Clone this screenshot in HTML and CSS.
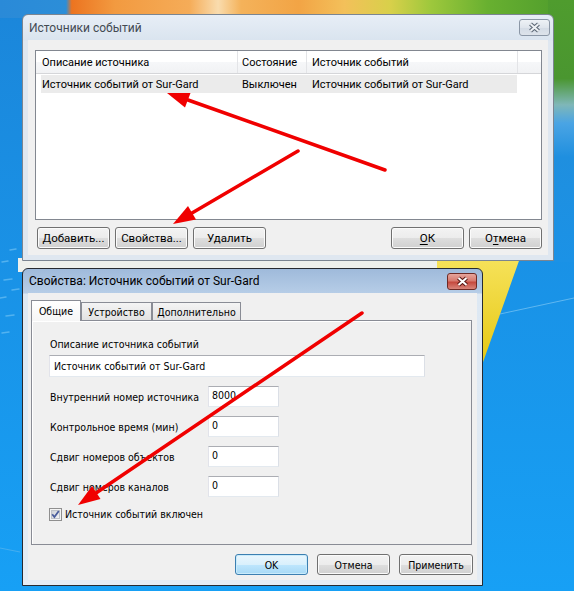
FILE: index.html
```html
<!DOCTYPE html>
<html lang="ru">
<head>
<meta charset="utf-8">
<title>Источники событий</title>
<link rel="stylesheet" href="styles.css">
</head>
<body>
<svg class="wallpaper" width="574" height="591" viewBox="0 0 574 591">
  <defs>
    <linearGradient id="gBlue" x1="0" y1="0" x2="0" y2="1">
      <stop offset="0" stop-color="#1b86da"/>
      <stop offset="1" stop-color="#17a0f5"/>
    </linearGradient>
    <linearGradient id="gTop" x1="0" y1="0" x2="574" y2="0" gradientUnits="userSpaceOnUse">
      <stop offset="0" stop-color="#2a8ad8"/>
      <stop offset="0.115" stop-color="#2c8ed8"/>
      <stop offset="0.125" stop-color="#ec7420"/>
      <stop offset="0.2" stop-color="#f29a40"/>
      <stop offset="0.33" stop-color="#f5ac58"/>
      <stop offset="0.38" stop-color="#f9dcae"/>
      <stop offset="0.42" stop-color="#f4b25a"/>
      <stop offset="0.52" stop-color="#f2a445"/>
      <stop offset="0.6" stop-color="#f3c05a"/>
      <stop offset="0.68" stop-color="#d8d04a"/>
      <stop offset="0.75" stop-color="#9ec83c"/>
      <stop offset="0.85" stop-color="#68b030"/>
      <stop offset="1" stop-color="#4c9a2c"/>
    </linearGradient>
    <linearGradient id="gRight" x1="0" y1="0" x2="0" y2="262" gradientUnits="userSpaceOnUse">
      <stop offset="0" stop-color="#4f9c2e"/>
      <stop offset="0.3" stop-color="#4a9630"/>
      <stop offset="0.4" stop-color="#7fb7b8"/>
      <stop offset="0.47" stop-color="#4aa4e4"/>
      <stop offset="0.6" stop-color="#1f8fdf"/>
      <stop offset="1" stop-color="#1b92e6"/>
    </linearGradient>
    <linearGradient id="gYellow" x1="0" y1="0" x2="0" y2="1">
      <stop offset="0" stop-color="#f6e25a"/>
      <stop offset="1" stop-color="#e6c812"/>
    </linearGradient>
  </defs>
  <rect width="574" height="591" fill="url(#gBlue)"/>
  <rect x="0" y="0" width="574" height="18" fill="url(#gTop)"/>
  <rect x="548" y="0" width="26" height="262" fill="url(#gRight)"/>
  <rect x="18" y="258" width="480" height="14" fill="#eef0ec"/>
  <polygon points="437,258 520,258 482,365 478,272 437,272" fill="url(#gYellow)"/>
  <g stroke="#6cc0f4" stroke-width="1.5" stroke-linecap="round" opacity="0.7">
    <line x1="2" y1="262" x2="8" y2="261"/>
    <line x1="4" y1="280" x2="12" y2="279"/>
    <line x1="0" y1="298" x2="6" y2="297"/>
    <line x1="6" y1="316" x2="14" y2="315"/>
    <line x1="2" y1="333" x2="9" y2="332"/>
    <line x1="10" y1="250" x2="16" y2="249"/>
    <line x1="12" y1="290" x2="19" y2="289"/>
  </g>
  <line x1="500" y1="314" x2="574" y2="298" stroke="#8fd0f7" stroke-width="1" opacity="0.6"/>
  <line x1="0" y1="548" x2="20" y2="552" stroke="#63b8ee" stroke-width="1" opacity="0.6"/>
</svg>

<div class="window w1">
  <div class="titlebar">
    <span class="title">Источники событий</span>
    <span class="closebtn gray">
      <svg width="15" height="11" viewBox="0 0 15 11"><path d="M3.5 2 L11.5 9 M11.5 2 L3.5 9" stroke="#5d6876" stroke-width="4.2" fill="none"/><path d="M3.5 2 L11.5 9 M11.5 2 L3.5 9" stroke="#eef1f4" stroke-width="2" fill="none"/></svg>
    </span>
  </div>
  <div class="client c1">
    <div class="listview">
      <div class="lv-head">
        <div class="hcol col-desc">Описание источника</div>
        <div class="hcol col-state">Состояние</div>
        <div class="hcol col-src">Источник событий</div>
        <div class="hcol col-fill"></div>
      </div>
      <div class="lv-row">
        <div class="rcol col-desc">Источник событий от Sur-Gard</div>
        <div class="rcol col-state">Выключен</div>
        <div class="rcol col-src">Источник событий от Sur-Gard</div>
      </div>
    </div>
    <div class="btnrow">
      <div class="btn">Добавить...</div>
      <div class="btn">Свойства...</div>
      <div class="btn">Удалить</div>
      <div class="spacer"></div>
      <div class="btn"><u>О</u>К</div>
      <div class="btn">О<u>т</u>мена</div>
    </div>
  </div>
</div>

<div class="window w2">
  <div class="titlebar">
    <span class="title">Свойства: Источник событий от Sur-Gard</span>
    <span class="closebtn red">
      <svg width="15" height="11" viewBox="0 0 15 11"><path d="M3.5 2 L11.5 9 M11.5 2 L3.5 9" stroke="#5a1a16" stroke-width="4.2" fill="none"/><path d="M3.5 2 L11.5 9 M11.5 2 L3.5 9" stroke="#ffffff" stroke-width="2" fill="none"/></svg>
    </span>
  </div>
  <div class="client c2">
    <div class="tabs">
      <div class="tab active t1">Общие</div>
      <div class="tab t2">Устройство</div>
      <div class="tab t3">Дополнительно</div>
    </div>
    <div class="panel">
      <div class="lbl top-lbl">Описание источника событий</div>
      <div class="textbox wide">Источник событий от Sur-Gard</div>
      <div class="fields">
        <div class="lbl">Внутренний номер источника</div><div class="textbox num">8000</div>
        <div class="lbl">Контрольное время (мин)</div><div class="textbox num">0</div>
        <div class="lbl">Сдвиг номеров объектов</div><div class="textbox num">0</div>
        <div class="lbl">Сдвиг номеров каналов</div><div class="textbox num">0</div>
      </div>
      <div class="check">
        <span class="cb"><svg width="13" height="13" viewBox="0 0 13 13"><defs><linearGradient id="gCb" x1="0" y1="0" x2="1" y2="1"><stop offset="0" stop-color="#cbcfd5"/><stop offset="1" stop-color="#f6f6f6"/></linearGradient></defs><rect x="0.5" y="0.5" width="12" height="12" fill="#f4f4f4" stroke="#8f8f8f"/><rect x="2.5" y="2.5" width="8" height="8" fill="url(#gCb)" stroke="#bfc3c9"/><path d="M3.2 6.2 L5.4 9 L9.8 3" stroke="#4a5d9c" stroke-width="1.8" fill="none"/></svg></span>
        <span class="check-lbl">Источник событий включен</span>
      </div>
    </div>
    <div class="btnrow2">
      <div class="btn default">OK</div>
      <div class="btn">Отмена</div>
      <div class="btn b-apply">Применить</div>
    </div>
  </div>
</div>

<svg class="arrows" width="574" height="591" viewBox="0 0 574 591">
  <g stroke="#f00000" stroke-width="3.5" stroke-linecap="round" fill="none">
    <line x1="385" y1="170" x2="188" y2="100"/>
    <line x1="298" y1="151" x2="192" y2="213"/>
    <line x1="362" y1="313" x2="96" y2="493"/>
  </g>
  <g fill="#f00000">
    <polygon points="167,93 190.5,93 185,107.5"/>
    <polygon points="173,224 188,206 196,219.5"/>
    <polygon points="78,505 92,486 100.5,499"/>
  </g>
</svg>
</body>
</html>
```

FILE: styles.css
```css
* { box-sizing: border-box; }
html, body { margin: 0; padding: 0; }
body {
  width: 574px;
  height: 591px;
  overflow: hidden;
  position: relative;
  background: #1a8fe2;
  font-family: Roboto, "Open Sans", sans-serif;
  font-size: 11px;
  color: #000;
}
.wallpaper, .arrows { position: absolute; left: 0; top: 0; display: block; }
.arrows { pointer-events: none; }

/* windows */
.window {
  position: absolute;
  display: flex;
  flex-direction: column;
  border: 1px solid #7b8591;
  border-radius: 6px 6px 0 0;
  padding: 0 5px 5px;
}
.w1 {
  left: 22px; top: 14px; width: 532px; height: 247px;
  background: linear-gradient(#e7eef6 0, #dae4ef 25px, #dfe7f0 26px, #dfe7f0 100%);
}
.w2 {
  left: 22px; top: 268px; width: 461px; height: 318px;
  border-color: #262a30;
  background: linear-gradient(#9fbadb 0, #b6cde7 24px, #dde8f3 25px, #e4ecf4 100%);
}
.titlebar {
  flex: none;
  display: flex;
  justify-content: space-between;
  align-items: flex-start;
}
.w1 .titlebar { height: 25px; }
.w2 .titlebar { height: 24px; }
.title {
  font-family: Roboto, "Open Sans", sans-serif;
  font-size: 12px;
  line-height: 16px;
  padding-left: 1px;
  white-space: nowrap;
}
.w1 .title { padding-top: 5px; color: #434a52; }
.w2 .title { padding-top: 4px; color: #000; }
.closebtn {
  margin-top: 4px;
  height: 17px;
  border-radius: 3px;
  display: flex;
  align-items: center;
  justify-content: center;
}
.closebtn.gray {
  width: 31px; margin-right: -2px;
  border: 1px solid #8b97a6;
  background: linear-gradient(#eef2f6 0, #dfe5ec 50%, #d3dbe5 51%, #dde3ea 100%);
}
.closebtn.red {
  width: 30px;
  border: 1px solid #6e2a25;
  background: linear-gradient(#e6a59c 0, #d77a6f 45%, #c54a3f 55%, #d8857a 100%);
}

.client { background: #f0f0f0; flex: 1; display: flex; flex-direction: column; }

/* dialog 1 */
.c1 { padding: 10px 6px 6px 7px; }
.listview {
  height: 170px;
  background: #fff;
  border: 1px solid #828790;
}
.lv-head {
  display: flex;
  height: 23px;
  background: linear-gradient(#ffffff 0, #ffffff 50%, #f6f7f9 51%, #f1f2f4 100%);
  border-bottom: 1px solid #d5d6d9;
}
.hcol {
  line-height: 20px;
  padding-top: 2px;
  border-right: 1px solid #e3e4e7;
  white-space: nowrap;
}
.hcol.col-desc { width: 202px; padding-left: 6px; }
.hcol.col-state { width: 69px; padding-left: 4px; }
.hcol.col-src { width: 211px; padding-left: 5px; }
.hcol.col-fill { flex: 1; border-right: none; }
.lv-row {
  display: flex;
  margin: 1px 0 0 5px;
  width: 476px;
  height: 18px;
  background: #ebebeb;
  line-height: 18px;
}
.rcol { white-space: nowrap; padding-top: 1px; }
.rcol.col-desc { width: 197px; padding-left: 1px; }
.rcol.col-state { width: 69px; padding-left: 4px; }
.rcol.col-src { width: 210px; padding-left: 5px; }

.btn {
  flex: none;
  width: 73px;
  height: 22px;
  border: 1px solid #707070;
  border-radius: 3px;
  background: linear-gradient(#f3f3f3 0, #ececec 50%, #dedede 51%, #d0d0d0 100%);
  box-shadow: inset 0 0 0 1px #fbfbfb;
  display: flex;
  align-items: center;
  justify-content: center;
  white-space: nowrap;
}
.btn u { text-decoration: underline; text-underline-offset: 2px; }
.btnrow {
  display: flex;
  gap: 5px;
  margin-top: 7px;
  padding-left: 2px;
  font-size: 11.5px;
}
.spacer { flex: 1; }

/* dialog 2 */
.c2 {
  padding: 7px 4px 5px 3px;
  font-family: "DejaVu Sans Condensed", "Liberation Sans", sans-serif;
  font-size: 10.5px;
}
.tabs { display: flex; height: 20px; align-items: flex-end; }
.tab {
  height: 18px;
  border: 1px solid #898c95;
  border-bottom: none;
  background: linear-gradient(#f4f4f4, #e2e2e2);
  display: flex;
  align-items: center;
  justify-content: center;
  line-height: 14px;
  padding-top: 1px;
}
.tab.active {
  height: 21px;
  margin-bottom: -1px;
  position: relative;
  z-index: 1;
  background: linear-gradient(#ffffff, #f6f6f6);
  padding-top: 0;
}
.t1 { width: 50px; }
.t2 { width: 71px; }
.t3 { width: 89px; }
.panel {
  width: 441px;
  height: 225px;
  border: 1px solid #898c95;
  background: #f0f0f0;
  box-shadow: inset 1px 1px 0 #ffffff;
  padding: 16px 0 0 17px;
}
.lbl { line-height: 15px; white-space: nowrap; }
.top-lbl { padding-left: 1px; }
.textbox {
  background: #fff;
  border: 1px solid;
  border-color: #abadb3 #dbdfe6 #e3e9ef #e2e3ea;
  white-space: nowrap;
}
.textbox.wide {
  margin-top: 3px;
  width: 376px;
  height: 22px;
  line-height: 20px;
  padding-left: 4px;
}
.fields {
  display: grid;
  grid-template-columns: 159px 71px;
  grid-auto-rows: 21px;
  row-gap: 9px;
  align-items: center;
  margin-top: 9px;
}
.fields .lbl { padding-left: 1px; padding-top: 2px; }
.textbox.num {
  height: 21px;
  line-height: 15px;
  padding: 1px 0 0 3px;
  align-self: stretch;
}
.check {
  display: flex;
  align-items: center;
  gap: 3px;
  margin-top: 11px;
  height: 13px;
}
.cb { display: block; width: 13px; height: 13px; }
.cb svg { display: block; }
.check-lbl { line-height: 15px; }

.btnrow2 {
  display: flex;
  justify-content: flex-end;
  gap: 9px;
  margin-top: 9px;
}
.btnrow2 .btn { height: 21px; }
.btnrow2 .b-apply { width: 74px; }
.btn.default {
  border-color: #3c7fb1;
  background: linear-gradient(#eaf6fd 0, #d9f0fc 50%, #bee6fd 51%, #a7d9f5 100%);
  box-shadow: inset 0 0 0 1px #c9ebfb;
}
```
